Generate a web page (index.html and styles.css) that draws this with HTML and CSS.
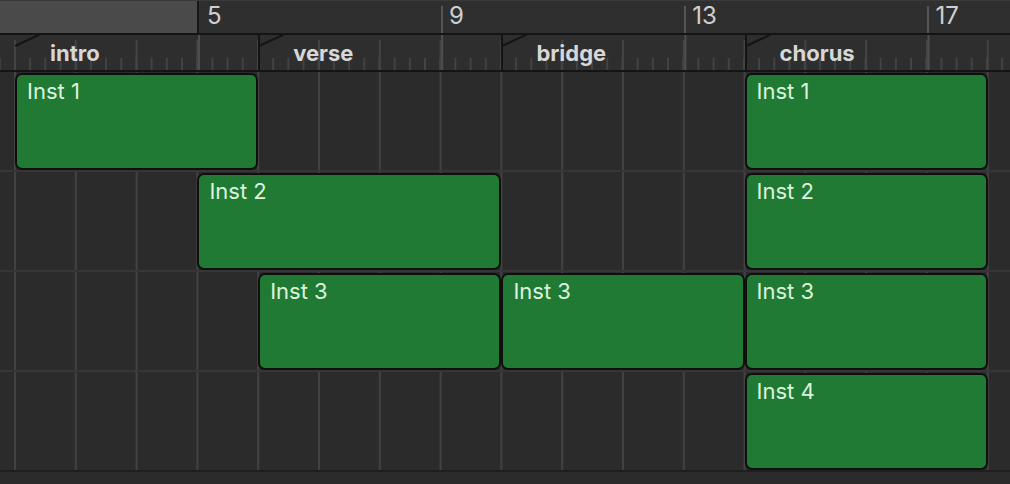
FILE: index.html
```html
<!DOCTYPE html>
<html lang="en">
<head>
<meta charset="utf-8">
<title>Arrangement</title>
<link rel="stylesheet" href="styles.css">
</head>
<body>
<div class="arrange">
  <div class="ruler">
    <div class="corner"></div>
    <div class="bar bar-first"><span>5</span></div>
    <div class="bar"><span>9</span></div>
    <div class="bar"><span>13</span></div>
    <div class="bar bar-last"><span>17</span></div>
  </div>
  <div class="markers">
    <div class="marker-lead"></div>
    <div class="section"><span class="section-label">intro</span></div>
    <div class="section"><span class="section-label">verse</span></div>
    <div class="section"><span class="section-label">bridge</span></div>
    <div class="section section-last"><span class="section-label">chorus</span></div>
  </div>
  <div class="tracks">
    <div class="region" style="grid-row: 1; grid-column: 2 / span 4;"><span class="region-name">Inst 1</span></div>
    <div class="region" style="grid-row: 1; grid-column: 14 / span 4;"><span class="region-name">Inst 1</span></div>
    <div class="region" style="grid-row: 2; grid-column: 5 / span 5;"><span class="region-name">Inst 2</span></div>
    <div class="region" style="grid-row: 2; grid-column: 14 / span 4;"><span class="region-name">Inst 2</span></div>
    <div class="region" style="grid-row: 3; grid-column: 6 / span 4;"><span class="region-name">Inst 3</span></div>
    <div class="region" style="grid-row: 3; grid-column: 10 / span 4;"><span class="region-name">Inst 3</span></div>
    <div class="region" style="grid-row: 3; grid-column: 14 / span 4;"><span class="region-name">Inst 3</span></div>
    <div class="region" style="grid-row: 4; grid-column: 14 / span 4;"><span class="region-name">Inst 4</span></div>
  </div>
  <div class="footer"></div>
</div>
</body>
</html>
```

FILE: styles.css
```css
html, body {
  margin: 0;
  padding: 0;
  background: #2b2b2b;
}

body {
  width: 1010px;
  height: 484px;
  overflow: hidden;
  font-family: "Inter", "Noto Sans", "Liberation Sans", sans-serif;
}

.arrange {
  display: flex;
  flex-direction: column;
  width: 1010px;
  height: 484px;
  overflow: hidden;
}

/* ---------- ruler ---------- */
.ruler {
  display: flex;
  height: 33px;
  box-sizing: border-box;
  border-top: 1px solid #3a3a3a;
  background: #2f2f2f;
  overflow: hidden;
}

.corner {
  flex: 0 0 199px;
  box-sizing: border-box;
  margin-top: -1px;
  height: 33px;
  background: #4a4a4a;
  border-right: 2px solid #161616;
}

.bar {
  flex: 0 0 243.2px;
  box-sizing: border-box;
  margin-top: 5px;
  border-left: 2px solid #555555;
  padding-left: 6px;
  padding-top: 1px;
  color: #cfcfcf;
  font-size: 24px;
  line-height: 18px;
}

.bar-first {
  flex-basis: 242px;
  border-left: 0;
  padding-left: 8px;
}

.bar-last {
  flex: 1 1 0;
  min-width: 0;
}

/* ---------- markers ---------- */
.markers {
  display: flex;
  height: 39px;
  box-sizing: border-box;
  border-top: 2px solid #141414;
  border-bottom: 2px solid #141414;
  background-color: #2e2e2e;
  background-image:
    linear-gradient(to right, #4e4e4e 2px, transparent 2px),
    linear-gradient(to right, #444444 2px, transparent 2px),
    linear-gradient(to right, #434343 1.5px, transparent 1.5px);
  background-size: 243.2px 100%, 60.8px 30px, 15.2px 12px;
  background-position: 198px 0, 14px 100%, 14px 100%;
  background-repeat: repeat-x;
  overflow: hidden;
}

.marker-lead {
  flex: 0 0 15px;
}

.section {
  position: relative;
  flex: 0 0 243.2px;
  box-sizing: border-box;
  padding-left: 35px;
  padding-top: 5px;
  color: #d7d7d7;
  font-size: 22px;
  font-weight: 700;
  line-height: 26px;
}

.section + .section {
  border-left: 2px solid #141414;
  padding-left: 33px;
}

.section-last {
  flex: 1 1 0;
  min-width: 0;
}

.section::before {
  content: "";
  position: absolute;
  left: 0;
  top: 9.5px;
  width: 27px;
  height: 1.5px;
  background: #141414;
  transform-origin: 0 50%;
  transform: rotate(-25deg);
}

.section + .section::before {
  left: -1px;
}

/* ---------- tracks ---------- */
.tracks {
  display: grid;
  grid-template-columns: 15px repeat(16, 60.8px) 1fr;
  grid-template-rows: repeat(4, 100px);
  height: 400px;
  background-color: #2b2b2b;
  background-image:
    linear-gradient(to bottom, transparent 98px, #363636 98px),
    linear-gradient(to right, #424242 2px, transparent 2px);
  background-size: 100% 100px, 60.8px 100%;
  background-position: 0 0, 14px 0;
  background-repeat: repeat-y, repeat-x;
}

.region {
  align-self: start;
  box-sizing: border-box;
  height: 97px;
  margin-top: 1px;
  background: #217a34;
  border: 2px solid #0f0f0f;
  border-radius: 7px;
  padding: 4px 0 0 10px;
  overflow: hidden;
}

.region-name {
  display: block;
  color: #dcf3de;
  font-size: 22px;
  line-height: 24px;
  white-space: nowrap;
}

.footer {
  flex: 1 1 auto;
  border-top: 2px solid #1f1f1f;
  margin-top: -2px;
  background: #2b2b2b;
}
```
